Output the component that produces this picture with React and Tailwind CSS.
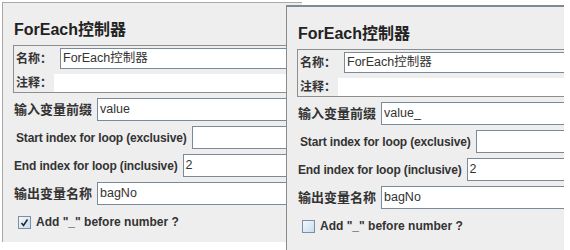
const font = { fontFamily: '"Liberation Sans", "Noto Sans CJK SC", sans-serif' };

function CheckBox({ checked }) {
  return (
    <div className="w-[13px] h-[13px] border border-[#7b8fa3] bg-gradient-to-br from-[#f4f8fc] to-[#c9dcee] flex items-center justify-center">
      {checked && (
        <svg width="9" height="9" viewBox="0 0 9 9">
          <path d="M1.5 5 L3.5 7.5 L7.5 1.5" fill="none" stroke="#1f2a35" strokeWidth="1.6" />
        </svg>
      )}
    </div>
  );
}

function Row({ label, value, cjk }) {
  return (
    <div className="flex items-center h-[23px]">
      <span className={"font-bold text-[#333] whitespace-nowrap " + (cjk ? "text-[13px]" : "text-[12px] tracking-[-0.15px]")}>{label}</span>
      <div className="ml-[5px] flex-1 h-[23px] bg-white border border-[#7a8a99] flex items-center pl-[2px] text-[12.5px] text-[#333]">
        {value}
      </div>
    </div>
  );
}

function Panel({ prefix, checked }) {
  return (
    <div className="w-[300px] h-full bg-[#eeeeee] flex flex-col pt-[17px] pl-[10px]" style={font}>
      <div className="pl-[1px] text-[16px] leading-[20px] font-bold text-[#222]">ForEach控制器</div>
      <div className="mt-[5px] border border-[#8e8e8e] flex flex-col pl-[2px] pt-[2px]">
        <div className="flex items-center h-[21px]">
          <span className="text-[12px] font-bold text-[#333] w-[44px]">名称：</span>
          <div className="flex-1 h-[21px] bg-white border border-[#7a8a99] flex items-center pl-[2px] text-[12.5px] text-[#333]">
            ForEach控制器
          </div>
        </div>
        <div className="flex items-center h-[18px] mt-[5px]">
          <span className="text-[12px] font-bold text-[#333] w-[38px]">注释：</span>
          <div className="flex-1 h-full bg-white" />
        </div>
      </div>
      <div className="flex flex-col gap-[5px] mt-[5px] pl-[1px]">
        <Row label="输入变量前缀" value={prefix} cjk />
        <div className="pl-[2px]">
          <Row label="Start index for loop (exclusive)" value="" />
        </div>
        <Row label="End index for loop (inclusive)" value="2" />
        <Row label="输出变量名称" value="bagNo" cjk />
      </div>
      <div className="flex items-center mt-[8px] pl-[5px] gap-[5px]">
        <CheckBox checked={checked} />
        <span className="text-[12px] font-bold text-[#333]">Add "_" before number ?</span>
      </div>
    </div>
  );
}

export default function App() {
  return (
    <div className="relative w-[570px] h-[250px] bg-white overflow-hidden">
      <div className="absolute left-[2px] top-[2px] w-[300px] h-[240px] border-t border-l border-[#a9a9a9] overflow-hidden">
        <Panel prefix="value" checked />
      </div>
      <div className="absolute left-[286px] top-[5px] w-[278px] h-[245px] border-t-2 border-t-[#7e8b93] border-l border-l-[#8a8a8a] overflow-hidden">
        <Panel prefix="value_" checked={false} />
      </div>
    </div>
  );
}
